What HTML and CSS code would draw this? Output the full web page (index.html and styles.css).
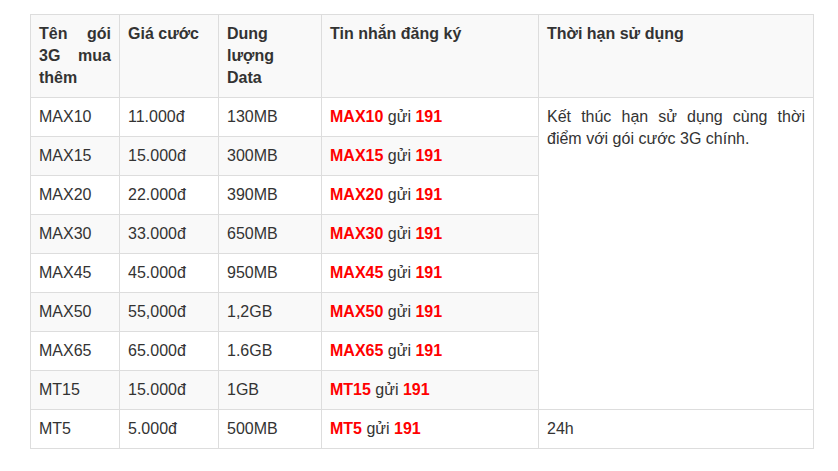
FILE: index.html
```html
<!DOCTYPE html>
<html lang="vi">
<head>
<meta charset="utf-8">
<link rel="stylesheet" href="styles.css">
</head>
<body>
<div class="wrap">
<table class="plans">
<colgroup>
<col class="c1"><col class="c2"><col class="c3"><col class="c4"><col class="c5">
</colgroup>
<thead>
<tr><th>Tên gói 3G mua thêm</th><th>Giá cước</th><th>Dung lượng Data</th><th>Tin nhắn đăng ký</th><th>Thời hạn sử dụng</th></tr>
</thead>
<tbody>
<tr><td>MAX10</td><td>11.000đ</td><td>130MB</td><td><b class="red">MAX10</b> gửi <b class="red">191</b></td><td rowspan="8">Kết thúc hạn sử dụng cùng thời điểm với gói cước 3G chính.</td></tr>
<tr><td>MAX15</td><td>15.000đ</td><td>300MB</td><td><b class="red">MAX15</b> gửi <b class="red">191</b></td></tr>
<tr><td>MAX20</td><td>22.000đ</td><td>390MB</td><td><b class="red">MAX20</b> gửi <b class="red">191</b></td></tr>
<tr><td>MAX30</td><td>33.000đ</td><td>650MB</td><td><b class="red">MAX30</b> gửi <b class="red">191</b></td></tr>
<tr><td>MAX45</td><td>45.000đ</td><td>950MB</td><td><b class="red">MAX45</b> gửi <b class="red">191</b></td></tr>
<tr><td>MAX50</td><td>55,000đ</td><td>1,2GB</td><td><b class="red">MAX50</b> gửi <b class="red">191</b></td></tr>
<tr><td>MAX65</td><td>65.000đ</td><td>1.6GB</td><td><b class="red">MAX65</b> gửi <b class="red">191</b></td></tr>
<tr><td>MT15</td><td>15.000đ</td><td>1GB</td><td><b class="red">MT15</b> gửi <b class="red">191</b></td></tr>
<tr><td>MT5</td><td>5.000đ</td><td>500MB</td><td><b class="red">MT5</b> gửi <b class="red">191</b></td><td>24h</td></tr>
</tbody>
</table>
</div>
</body>
</html>
```
FILE: styles.css
```css
html, body {
  margin: 0;
  padding: 0;
  background: #fff;
}
.wrap {
  padding: 14px 0 0 30px;
}
.plans {
  border-collapse: collapse;
  width: 783px;
  table-layout: fixed;
  font-family: "Liberation Sans", Arial, sans-serif;
  font-size: 16px;
  line-height: 22px;
  color: #333;
  border: 1px solid #ddd;
}
.c1 { width: 89px; }
.c2 { width: 99px; }
.c3 { width: 103px; }
.c4 { width: 217px; }
.c5 { width: 275px; }
.plans th,
.plans td {
  border: 1px solid #ddd;
  padding: 8px 8px 8px 8px;
  vertical-align: top;
  text-align: justify;
}
.plans th {
  font-weight: bold;
  background: #f9f9f9;
}
.plans tbody tr:nth-child(even) td {
  background: #f9f9f9;
}
.plans td[rowspan] {
  background: #fff;
}
.red {
  color: #ff0000;
}
```
